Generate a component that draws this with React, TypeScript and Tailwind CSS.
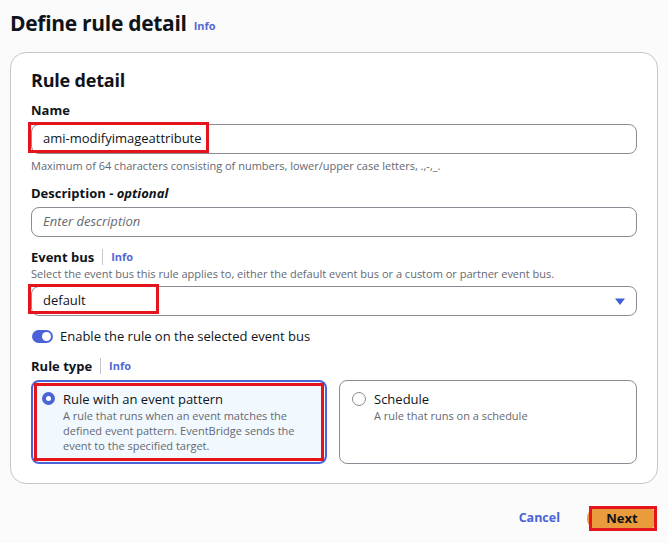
export default function App() {
  return (
    <div className="min-h-[543px] w-[668px] bg-[#fbfbfb] font-['Open_Sans',sans-serif] text-[#0f141a]">
      {/* Page header */}
      <div className="flex items-end gap-[7px] px-[10px] pt-[8px]">
        <h1 className="text-[21px] font-bold leading-[30px] tracking-[-0.3px]">Define rule detail</h1>
        <a href="#" className="mb-[4px] text-[11px] font-bold text-[#5468d4]">Info</a>
      </div>

      {/* Card */}
      <div className="mx-[10px] mt-[14px] rounded-2xl border border-[#c6c6cd] bg-white px-[20px] pb-[19px] pt-[14px]">
        <h2 className="text-[18px] font-bold leading-[26px] tracking-[-0.2px]">Rule detail</h2>

        {/* Name */}
        <div className="mt-[8px] text-[13px] font-bold leading-[18px]">Name</div>
        <div className="relative mt-[5px]">
          <div className="flex h-[30px] items-center rounded-lg border border-[#8c8c94] bg-white px-[11px] text-[13px]">
            ami-modifyimageattribute
          </div>
          <div className="pointer-events-none absolute left-[-3px] top-[-2px] h-[31px] w-[181px] border-[3px] border-[#e3141b]" />
        </div>
        <div className="mt-[4px] text-[11px] leading-[16px] text-[#656871]">
          Maximum of 64 characters consisting of numbers, lower/upper case letters, .,-,_.
        </div>

        {/* Description */}
        <div className="mt-[10px] text-[13px] font-bold leading-[18px]">
          Description - <i>optional</i>
        </div>
        <div className="mt-[5px] flex h-[30px] items-center rounded-lg border border-[#8c8c94] bg-white px-[11px] text-[13px] italic text-[#656871]">
          Enter description
        </div>

        {/* Event bus */}
        <div className="mt-[11px] flex items-center text-[13px] leading-[18px]">
          <span className="font-bold">Event bus</span>
          <span className="mx-[8px] h-[16px] w-px bg-[#c6c6cd]" />
          <a href="#" className="text-[11px] font-bold text-[#5468d4]">Info</a>
        </div>
        <div className="text-[11px] leading-[16px] text-[#656871]">
          Select the event bus this rule applies to, either the default event bus or a custom or partner event bus.
        </div>
        <div className="relative mt-[4px]">
          <div className="flex h-[30px] items-center justify-between rounded-lg border border-[#8c8c94] bg-white pl-[11px] pr-[10px] text-[13px]">
            <span>default</span>
            <svg width="12" height="9" viewBox="0 0 12 9">
              <path d="M1 1.5h10L6 8z" fill="#3f5fd8" />
            </svg>
          </div>
          <div className="pointer-events-none absolute left-[-3px] top-[-2px] h-[30px] w-[131px] border-[3px] border-[#e3141b]" />
        </div>

        {/* Toggle */}
        <div className="mt-[11px] flex items-center gap-[7px] text-[13px] leading-[18px]">
          <span className="relative ml-[1px] flex h-[13px] w-[21px] items-center rounded-full bg-[#4a63d7]">
            <span className="absolute right-[2px] h-[9px] w-[9px] rounded-full bg-white" />
          </span>
          <span>Enable the rule on the selected event bus</span>
        </div>

        {/* Rule type */}
        <div className="mt-[12px] flex items-center text-[13px] leading-[18px]">
          <span className="font-bold">Rule type</span>
          <span className="mx-[8px] h-[16px] w-px bg-[#c6c6cd]" />
          <a href="#" className="text-[11px] font-bold text-[#5468d4]">Info</a>
        </div>
        <div className="mt-[5px] grid grid-cols-[296px_1fr] gap-[12px]">
          <div className="relative flex h-[84px] gap-[8px] rounded-lg border-2 border-[#4a63d7] bg-[#f1f9ff] px-[9px] pt-[8px]">
            <span className="mt-[2px] flex h-[13px] w-[13px] shrink-0 items-center justify-center rounded-full bg-[#4a63d7]">
              <span className="h-[5px] w-[5px] rounded-full bg-white" />
            </span>
            <div>
              <div className="text-[13px] leading-[18px]">Rule with an event pattern</div>
              <div className="pr-[6px] text-[11px] leading-[15px] text-[#656871]">
                A rule that runs when an event matches the defined event pattern. EventBridge sends the event to the specified target.
              </div>
            </div>
            <div className="pointer-events-none absolute inset-[1px] border-[3px] border-[#e3141b]" />
          </div>
          <div className="flex h-[84px] gap-[8px] rounded-lg border border-[#8c8c94] bg-white px-[12px] pt-[9px]">
            <span className="mt-[2px] h-[14px] w-[14px] shrink-0 rounded-full border border-[#8c8c94]" />
            <div>
              <div className="text-[13px] leading-[18px]">Schedule</div>
              <div className="text-[11px] leading-[15px] text-[#656871]">A rule that runs on a schedule</div>
            </div>
          </div>
        </div>
      </div>

      {/* Footer */}
      <div className="mt-[22px] flex items-center justify-end gap-[27px] pr-[11px]">
        <button className="text-[12.5px] font-bold text-[#4a63d7]">Cancel</button>
        <div className="relative">
          <button className="flex h-[25px] w-[70px] items-center justify-center rounded-full bg-[#ea9b3c] text-[13px] font-bold text-[#0f141a]">
            Next
          </button>
          <div className="pointer-events-none absolute left-[2px] top-0 h-[25px] w-[68px] border-[3px] border-[#e3141b]" />
        </div>
      </div>
    </div>
  );
}
